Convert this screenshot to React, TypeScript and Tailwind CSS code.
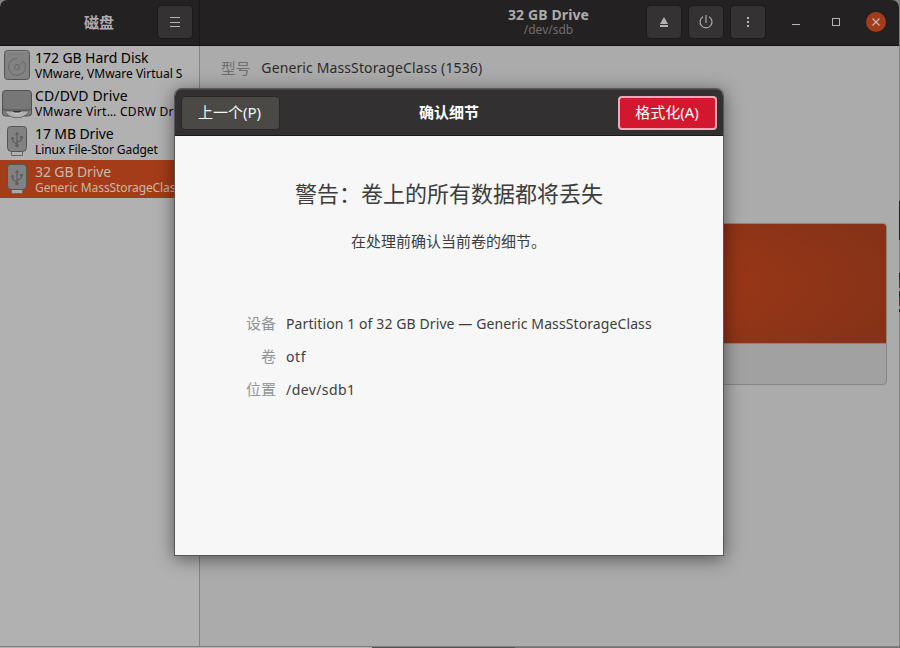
import React from "react";

const sans = "font-['Noto_Sans','Noto_Sans_CJK_SC',sans-serif]";

function HardDiskIcon() {
  return (
    <svg width="34" height="38" viewBox="0 0 34 38" fill="none">
      <rect x="4.5" y="4.5" width="25" height="29" rx="3" fill="#828282" stroke="#555" />
      <path d="M7 5.500h20" stroke="#949494" />
      <circle cx="17" cy="21" r="2.500" stroke="#666" />
      <path d="M17 12.500a8.500 8.500 0 1 0 8.500 8.500q0-3-2-5.500l-3 2.500" stroke="#686868" />
    </svg>
  );
}

function OpticalIcon() {
  return (
    <svg width="34" height="38" viewBox="0 0 34 38" fill="none">
      <path d="M2.500 22h29v7q0 3-3 3h-23q-3 0-3-3z" fill="#7c7c7c" stroke="#505050" />
      <path d="M5 27c4 9 20 9 24 0z" fill="#b0b0b0" stroke="#686868" />
      <path d="M12 27.500c1 4 9 4 10 0z" fill="#c2c2c2" />
      <path d="M5.500 6.500h23q3 0 3 3v14q0 2.500-3 2.500h-23q-3 0-3-2.500v-14q0-3 3-3z" fill="#777" stroke="#505050" />
      <path d="M12 27h10l-2.500 1.500h-5z" fill="#333" />
    </svg>
  );
}

function UsbDriveIcon({ active = false }: { active?: boolean }) {
  return (
    <svg width="34" height="38" viewBox="0 0 34 38" fill="none">
      <path d="M11.500 29v4.500h11V29" fill={active ? "#aaa" : "#b1b1b1"} stroke="#666" />
      <path d="M10.500 4.500h13q3 0 3 3v18q0 4-4 4h-11q-4 0-4-4v-18q0-3 3-3z" fill="#828282" stroke="#555" />
      <path d="M17 11v13M12.500 17v1q0 2 4.500 4M21.500 15v2q0 2-4.500 3" stroke="#606060" strokeWidth="1.300" />
      <path d="m15 13 2-3.500 2 3.500z" fill="#606060" />
      <circle cx="17" cy="23.500" r="1.800" fill="#606060" />
      <circle cx="12.500" cy="16.500" r="1.400" fill="#606060" />
      <path d="M20 14h3v2.500h-3z" fill="#606060" />
    </svg>
  );
}

type Drive = { icon: React.ReactNode; name: string; detail: string; nameTrack: string; detailTrack: string; active?: boolean };

const drives: Drive[] = [
  { icon: <HardDiskIcon />, name: "172 GB Hard Disk", detail: "VMware, VMware Virtual S", nameTrack: "tracking-[-0.07px]", detailTrack: "tracking-[0px]" },
  { icon: <OpticalIcon />, name: "CD/DVD Drive", detail: "VMware Virt… CDRW Drive", nameTrack: "tracking-[0.12px]", detailTrack: "tracking-[0.3px]" },
  { icon: <UsbDriveIcon />, name: "17 MB Drive", detail: "Linux File-Stor Gadget", nameTrack: "tracking-[-0.1px]", detailTrack: "tracking-[-0.07px]" },
  { icon: <UsbDriveIcon active />, name: "32 GB Drive", detail: "Generic MassStorageClass", nameTrack: "tracking-[-0.1px]", detailTrack: "tracking-[-0.1px]", active: true },
];

function HeaderButton({ children }: { children: React.ReactNode }) {
  return (
    <div className="flex h-[32px] w-[34px] shrink-0 items-center justify-center rounded-[3px] bg-[#343233] outline outline-1 outline-[#1d1b1c]">
      {children}
    </div>
  );
}

function Field({ label, value, track }: { label: string; value: string; track: string }) {
  return (
    <div className="flex h-[33px] items-center">
      <div className="w-[101px] text-right text-[15px] text-[#929595]">{label}</div>
      <div className={`ml-[10px] whitespace-nowrap text-[14px] text-[#3d3d3d] ${track}`}>{value}</div>
    </div>
  );
}

export default function App() {
  return (
    <div className={`relative flex h-[648px] w-[900px] flex-col overflow-hidden bg-[#808080] leading-none ${sans}`}>
      <div className="flex h-[647px] w-[899px] flex-col overflow-hidden rounded-t-[7px] border-b border-[#808080] bg-[#ababab]">
        <header className="flex h-[46px] shrink-0 border-b border-[#111] bg-[#242122] text-[#adabac]">
          <div className="flex w-[200px] items-center border-r border-[#1a1818] pb-[1px] pr-[7px]">
            <div className="flex-1 pl-[40px] text-center text-[15px] font-bold">磁盘</div>
            <HeaderButton>
              <svg width="12" height="12" viewBox="0 0 12 12" stroke="#b5b3b4">
                <path d="M1 1.500h10M1 6.500h10M1 10.500h10" />
              </svg>
            </HeaderButton>
          </div>
          <div className="grid flex-1 grid-cols-[1fr_auto_1fr] items-center pb-[1px]">
            <div />
            <div className="flex flex-col items-center pr-[2px]">
              <div className="text-[14px] font-bold leading-[15px] tracking-[0.12px]">32 GB Drive</div>
              <div className="text-[12px] leading-[16px] text-[#706e6f]">/dev/sdb</div>
            </div>
            <div className="flex items-center justify-end gap-[8px] pr-[13px]">
              <HeaderButton>
                <svg width="10" height="10" viewBox="0 0 10 10" fill="#b5b3b4">
                  <path d="M5 0 9 7H1zM1 8h8v2H1z" />
                </svg>
              </HeaderButton>
              <HeaderButton>
                <svg width="16" height="16" viewBox="0 0 16 16" fill="none" stroke="#b5b3b4" strokeWidth="1.100">
                  <path d="M8 1v8M5 2.700a6 6 0 1 0 6 0" />
                </svg>
              </HeaderButton>
              <HeaderButton>
                <svg width="4" height="12" viewBox="0 0 4 12" fill="#b5b3b4">
                  <path d="M1 1h2v2H1zM1 5h2v2H1zM1 9h2v2H1z" />
                </svg>
              </HeaderButton>
              <div className="ml-[19px] mt-[5px] h-px w-[8px] bg-[#b5b3b4]" />
              <div className="ml-[24px] h-[8px] w-[8px] border border-[#b5b3b4]" />
              <div className="ml-[18px] flex h-[20px] w-[20px] items-center justify-center rounded-full bg-[#a43c19]">
                <svg width="8" height="8" viewBox="0 0 8 8" stroke="#c5b7b1" strokeWidth="1.200">
                  <path d="m.5.5 7 7M7.500.5l-7 7" />
                </svg>
              </div>
            </div>
          </div>
        </header>
        <div className="flex min-h-0 flex-1">
          <aside className="w-[200px] shrink-0 border-r border-[#858585] bg-[#b1b1b1]">
            {drives.map((d) => (
              <div key={d.name} className={`flex h-[38px] overflow-hidden ${d.active ? "bg-[#a43c19] text-[#cfb5ab]" : "text-black"}`}>
                <div className="w-[35px] shrink-0">{d.icon}</div>
                <div className="whitespace-nowrap pt-[4px]">
                  <div className={`text-[14px] leading-[16px] ${d.nameTrack}`}>{d.name}</div>
                  <div className={`text-[12px] leading-[15px] ${d.detailTrack}`}>{d.detail}</div>
                </div>
              </div>
            ))}
          </aside>
          <main className="flex min-w-0 flex-1 flex-col pl-[12px] pr-[12px]">
            <div className="flex h-[44px] items-center pl-[9px]">
              <span className="text-[14.67px] text-[#6e6e6e]">型号</span>
              <span className="ml-[11px] whitespace-nowrap text-[14px] tracking-[0.12px] text-[#2b2b2b]">Generic MassStorageClass (1536)</span>
            </div>
            <div className="mt-[133px] flex h-[162px] flex-col overflow-hidden rounded-[4px] border border-[#858585] bg-[#a1a1a1]">
              <div className="h-[120px] border-b border-[#858585] bg-[radial-gradient(ellipse_340px_100px_at_center,#9c3717_0%,#973617_55%,#853218_110%)]" />
            </div>
          </main>
        </div>
      </div>
      <div className="flex h-px">
        <div className="w-[372px] bg-[#b5b1af]" />
        <div className="w-[143px] bg-[#545052]" />
        <div className="flex-1 bg-[#777274]" />
      </div>
      <div className="absolute right-0 top-[201px] h-[39px] w-px bg-[#222]" />
      <div className="absolute right-0 top-[273px] h-[39px] w-px bg-[repeating-linear-gradient(#222_0_6px,#79203d_6px_15px,#b58490_15px_18px)]" />

      <section className="absolute left-[175px] top-[89px] flex h-[466px] w-[548px] flex-col overflow-hidden rounded-t-[7px] bg-[#f7f7f7] shadow-[0_0_0_1px_#565656,0_3px_18px_1px_rgba(0,0,0,0.5)]">
        <div className="grid h-[47px] shrink-0 grid-cols-[1fr_auto_1fr] items-center border-b border-[#1b1a1a] border-t border-t-[#484647] bg-[#323031] px-[6px] text-[15px] text-white">
          <div className="flex h-[34px] w-[99px] items-center justify-center rounded-[4px] border border-[#282727] bg-[#4a4946] pr-[2px] text-[#f5f5f5]">
            上一个(P)
          </div>
          <div className="pb-[1px] font-bold">确认细节</div>
          <div className="flex h-[34px] w-[99px] items-center justify-center justify-self-end rounded-[4px] border-2 border-[#edadb8] bg-[#d2182e] pr-[1px]">
            格式化(A)
          </div>
        </div>
        <div className="flex flex-col pt-[41px] text-center text-[#3d3d3d]">
          <div className="text-[22px] leading-[32px]">警告：卷上的所有数据都将丢失</div>
          <div className="mt-[21px] pr-[1px] text-[15px] leading-[22px]">在处理前确认当前卷的细节。</div>
        </div>
        <div className="mt-[55px] flex flex-col">
          <Field label="设备" value="Partition 1 of 32 GB Drive — Generic MassStorageClass" track="tracking-[0.1px]" />
          <Field label="卷" value="otf" track="tracking-[0.6px]" />
          <Field label="位置" value="/dev/sdb1" track="tracking-[0.42px]" />
        </div>
      </section>
    </div>
  );
}
